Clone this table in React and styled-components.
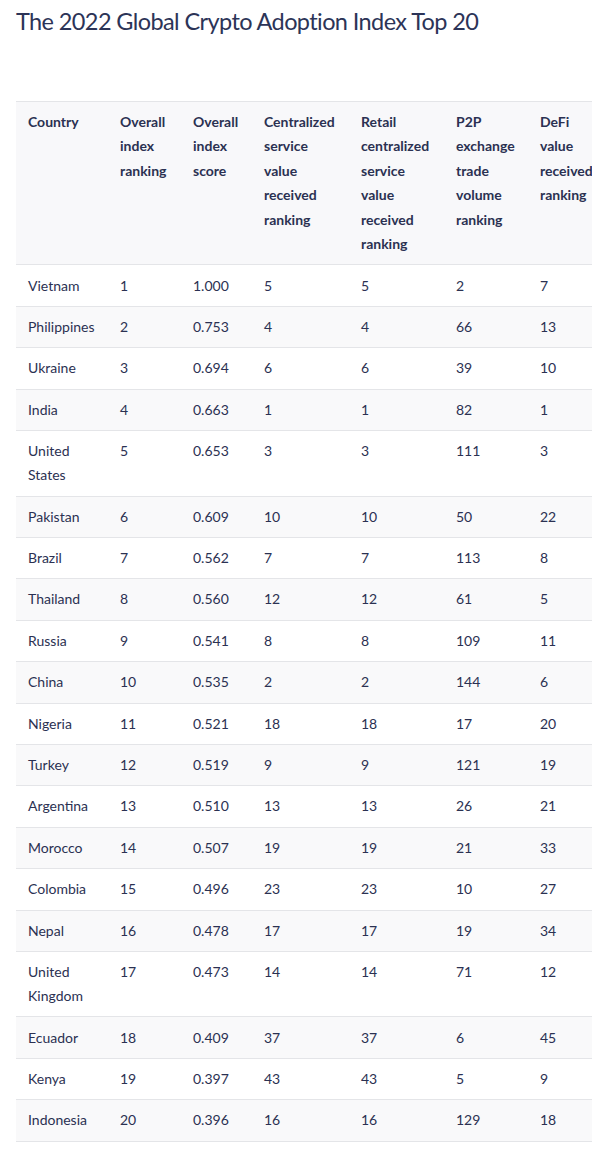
import React from 'react';
import styled, { createGlobalStyle } from 'styled-components';

const GlobalStyle = createGlobalStyle`
  body {
    margin: 0;
    background: #fff;
    font-family: Lato, "Noto Sans", sans-serif;
    color: #2b3152;
  }
`;

const Page = styled.div`
  padding: 5px 15px 20px 16px;
`;

const Title = styled.h2`
  margin: 0 0 64px 0;
  font-size: 23.5px;
  line-height: 32px;
  font-weight: 400;
  letter-spacing: -0.6px;
  color: #2c3457;
`;

const TableWrap = styled.div`
  width: 576px;
  overflow: hidden;
`;

const Table = styled.table`
  border-collapse: collapse;
  table-layout: fixed;
  width: 596px;
  font-size: 14px;
  border-top: 1px solid #e4e5e8;
`;

const Th = styled.th`
  box-sizing: border-box;
  text-align: left;
  vertical-align: top;
  font-weight: 700;
  line-height: 24.4px;
  padding: 8px 12px;
  background: #f8f8fa;
  border-bottom: 1px solid #e4e5e8;
  width: ${p => p.$w}px;
`;

const Row = styled.tr`
  background: ${p => (p.$even ? '#f9f9fa' : '#fff')};
`;

const Td = styled.td`
  vertical-align: top;
  line-height: 24.2px;
  padding: 8.1px 12px;
  border-bottom: 1px solid #e4e5e8;
`;

const columns = [
  { label: 'Country', w: 92 },
  { label: 'Overall index ranking', w: 73 },
  { label: 'Overall index score', w: 71 },
  { label: 'Centralized service value received ranking', w: 97 },
  { label: 'Retail centralized service value received ranking', w: 95 },
  { label: 'P2P exchange trade volume ranking', w: 84 },
  { label: 'DeFi value received ranking', w: 84 },
];

const data = [
  ['Vietnam', 1, '1.000', 5, 5, 2, 7],
  ['Philippines', 2, '0.753', 4, 4, 66, 13],
  ['Ukraine', 3, '0.694', 6, 6, 39, 10],
  ['India', 4, '0.663', 1, 1, 82, 1],
  ['United States', 5, '0.653', 3, 3, 111, 3],
  ['Pakistan', 6, '0.609', 10, 10, 50, 22],
  ['Brazil', 7, '0.562', 7, 7, 113, 8],
  ['Thailand', 8, '0.560', 12, 12, 61, 5],
  ['Russia', 9, '0.541', 8, 8, 109, 11],
  ['China', 10, '0.535', 2, 2, 144, 6],
  ['Nigeria', 11, '0.521', 18, 18, 17, 20],
  ['Turkey', 12, '0.519', 9, 9, 121, 19],
  ['Argentina', 13, '0.510', 13, 13, 26, 21],
  ['Morocco', 14, '0.507', 19, 19, 21, 33],
  ['Colombia', 15, '0.496', 23, 23, 10, 27],
  ['Nepal', 16, '0.478', 17, 17, 19, 34],
  ['United Kingdom', 17, '0.473', 14, 14, 71, 12],
  ['Ecuador', 18, '0.409', 37, 37, 6, 45],
  ['Kenya', 19, '0.397', 43, 43, 5, 9],
  ['Indonesia', 20, '0.396', 16, 16, 129, 18],
];

export default function App() {
  return (
    <>
      <GlobalStyle />
      <Page>
        <Title>The 2022 Global Crypto Adoption Index Top 20</Title>
        <TableWrap>
          <Table>
            <thead>
              <tr>
                {columns.map(c => (
                  <Th key={c.label} $w={c.w}>{c.label}</Th>
                ))}
              </tr>
            </thead>
            <tbody>
              {data.map((row, i) => (
                <Row key={row[0]} $even={i % 2 === 1}>
                  {row.map((cell, j) => (
                    <Td key={j}>{cell}</Td>
                  ))}
                </Row>
              ))}
            </tbody>
          </Table>
        </TableWrap>
      </Page>
    </>
  );
}
